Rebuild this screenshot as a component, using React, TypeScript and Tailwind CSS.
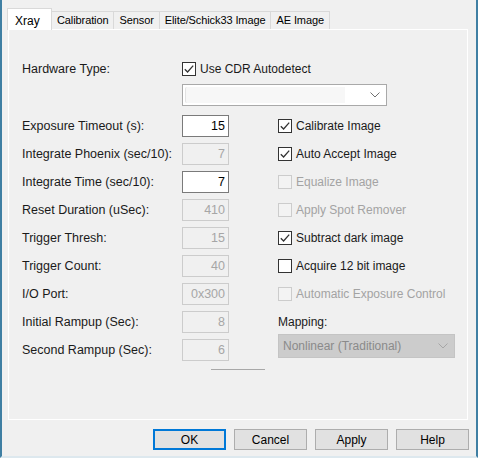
import React from "react";

const F = "font-['Liberation_Sans',Arial,sans-serif]";

function CheckMark({ color }: { color: string }) {
  return (
    <svg width="12" height="12" viewBox="0 0 12 12">
      <path d="M1.8 6.2 L4.6 9 L10.2 2.6" fill="none" stroke={color} strokeWidth="1.3" />
    </svg>
  );
}

function Check({ label, checked, disabled }: { label: string; checked?: boolean; disabled?: boolean }) {
  return (
    <div className="flex items-center h-[22px]">
      <div
        className={
          disabled
            ? "w-[14px] h-[14px] border border-[#cccccc] bg-[#f3f3f3] flex items-center justify-center"
            : "w-[14px] h-[14px] border border-[#333333] bg-white flex items-center justify-center"
        }
      >
        {checked && <CheckMark color="#333333" />}
      </div>
      <span className={disabled ? "ml-[4px] text-[12px] text-[#a3a3a3]" : "ml-[4px] text-[12px] text-[#1a1a1a]"}>
        {label}
      </span>
    </div>
  );
}

function Chevron({ color }: { color: string }) {
  return (
    <svg width="10" height="6" viewBox="0 0 10 6">
      <path d="M0.5 0.5 L5 5 L9.5 0.5" fill="none" stroke={color} strokeWidth="1" />
    </svg>
  );
}

const leftRows: [string, string, boolean][] = [
  ["Exposure Timeout (s):", "15", true],
  ["Integrate Phoenix (sec/10):", "7", false],
  ["Integrate Time (sec/10):", "7", true],
  ["Reset Duration (uSec):", "410", false],
  ["Trigger Thresh:", "15", false],
  ["Trigger Count:", "40", false],
  ["I/O Port:", "0x300", false],
  ["Initial Rampup (Sec):", "8", false],
  ["Second Rampup (Sec):", "6", false],
];

function RightItem({ i }: { i: number }) {
  switch (i) {
    case 0:
      return <Check label="Calibrate Image" checked />;
    case 1:
      return <Check label="Auto Accept Image" checked />;
    case 2:
      return <Check label="Equalize Image" disabled />;
    case 3:
      return <Check label="Apply Spot Remover" disabled />;
    case 4:
      return <Check label="Subtract dark image" checked />;
    case 5:
      return <Check label="Acquire 12 bit image" />;
    case 6:
      return <Check label="Automatic Exposure Control" disabled />;
    case 7:
      return (
        <div className="h-[22px] flex items-center text-[12px] text-[#1a1a1a]">Mapping:</div>
      );
    default:
      return (
        <div className="-mt-[5px] w-[177px] h-[24px] bg-[#cccccc] border border-[#c4c4c4] flex items-center justify-between pl-[4px] pr-[6px]">
          <span className="text-[12px] text-[#8a8a8a]">Nonlinear (Traditional)</span>
          <Chevron color="#a6a6a6" />
        </div>
      );
  }
}

function Button({ label, primary }: { label: string; primary?: boolean }) {
  return (
    <div
      className={
        primary
          ? "w-[73px] h-[21px] bg-[#e1e1e1] border-2 border-[#0078d7] flex items-center justify-center text-[12px] text-black"
          : "w-[73px] h-[21px] bg-[#e1e1e1] border border-[#adadad] flex items-center justify-center text-[12px] text-black"
      }
    >
      {label}
    </div>
  );
}

export default function App() {
  const tabs = ["Calibration", "Sensor", "Elite/Schick33 Image", "AE Image"];
  return (
    <div
      className={`${F} w-[478px] h-[458px] bg-[#f0f0f0] border-l-2 border-r-2 border-b-2 border-l-[#3f7fa3] border-r-[#3f7fa3] border-b-[#dde8ee] flex flex-col overflow-hidden`}
    >
      {/* tab strip */}
      <div className="flex items-end pt-[8px] pl-[5px] h-[29px]">
        <div className="relative z-10 w-[45px] h-[22px] -mb-[1px] bg-white border border-b-0 border-[#d9d9d9] pl-[7px] flex items-start pt-[3px] text-[12px] text-black">
          Xray
        </div>
        {tabs.map((t) => (
          <div
            key={t}
            className="h-[18px] border border-b-0 border-l-0 border-[#d9d9d9] bg-[#f0f0f0] px-[5px] flex items-center text-[11px] text-black tracking-[-0.1px]"
          >
            {t}
          </div>
        ))}
      </div>

      {/* panel */}
      <div className="ml-[6px] w-[460px] h-[391px] border border-white bg-[#f0f0f0] pt-[28px] pl-[13px] relative">
        {/* hardware type row */}
        <div className="flex items-center h-[22px]">
          <div className="w-[160px] text-[12.5px] text-[#1a1a1a]">Hardware Type:</div>
          <Check label="Use CDR Autodetect" checked />
        </div>
        {/* combobox */}
        <div className="flex mt-[4px]">
          <div className="w-[160px]" />
          <div className="w-[205px] h-[22px] border border-[#a9a9a9] bg-white flex items-center">
            <div className="ml-[2px] w-[160px] h-[16px] bg-[#f7f7f7] border-l border-[#e2e2e2] rounded-l-[2px]" />
            <div className="flex-1 flex justify-end pr-[6px]">
              <Chevron color="#707070" />
            </div>
          </div>
        </div>
        {/* rows */}
        <div className="mt-[9px] flex flex-col gap-[6px]">
          {leftRows.map(([label, val, enabled], i) => (
            <div key={label} className="flex items-center h-[22px]">
              <div className="w-[160px] text-[12.5px] text-[#1a1a1a]">{label}</div>
              <div
                className={
                  enabled
                    ? "w-[47px] h-[22px] border border-[#7a7a7a] bg-white flex items-center justify-end pr-[3px] text-[12.5px] text-black"
                    : "w-[47px] h-[22px] border border-[#cccccc] bg-[#f0f0f0] flex items-center justify-end pr-[3px] text-[12.5px] text-[#a6a6a6]"
                }
              >
                {val}
              </div>
              <div className="ml-[49px] self-start">
                <RightItem i={i} />
              </div>
            </div>
          ))}
        </div>
        <div className="mt-[8px] ml-[189px] w-[54px] h-px bg-[#a8a8a8]" />
      </div>

      {/* buttons */}
      <div className="mt-[9px] pl-[151px] flex gap-[8px]">
        <Button label="OK" primary />
        <Button label="Cancel" />
        <Button label="Apply" />
        <Button label="Help" />
      </div>
    </div>
  );
}
